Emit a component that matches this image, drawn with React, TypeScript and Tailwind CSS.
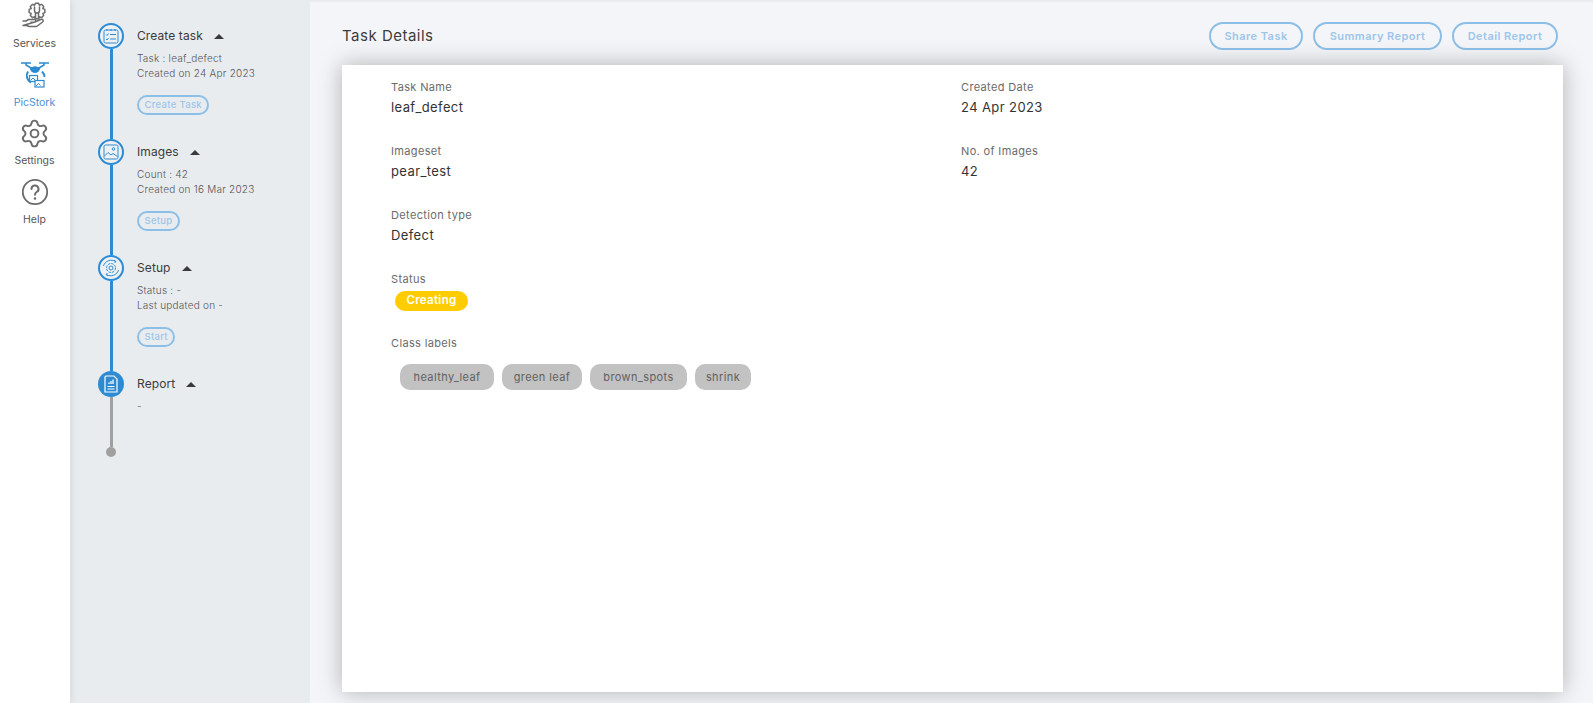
import React from "react";
import { Settings } from "lucide-react";

const BLUE = "#2d8bd3";

// 8 tooth outline round (cx, cy), used by the services icon only
function gearPath(cx: number, cy: number, outer: number, inner: number) {
  const pts: string[] = [];
  for (let i = 0; i < 8; i++) {
    const a = (i * Math.PI) / 4;
    [
      [-0.39, inner],
      [-0.2, outer],
      [0.2, outer],
      [0.39, inner],
    ].forEach(([d, r]) => {
      pts.push(`${(cx + r * Math.sin(a + d)).toFixed(2)} ${(cy - r * Math.cos(a + d)).toFixed(2)}`);
    });
  }
  return `M${pts.join("L")}z`;
}

function ServicesIcon() {
  return (
    <svg width="30" height="30" viewBox="0 0 30 30" fill="none" stroke="#6b6b6b" strokeWidth="1.500" strokeLinejoin="round" strokeLinecap="round">
      <path d={gearPath(17, 10, 8, 6.300)} fill="#fff" />
      <path d="M14.500 6v3.500a2.500 2.500 0 0 0 5 0V6M15.500 12v6M18.500 12v6" />
      <path d="M3 20h3l2.500-1.500h6c1.800 0 1.800 2.800 0 2.800h-3.500M14.800 21l6-2.500c2-.7 3.200 1.300 1.800 2.500l-6 4.500H9L7 24.500H3z" fill="#fff" />
    </svg>
  );
}

function DroneIcon() {
  return (
    <svg width="30" height="30" viewBox="0 0 30 30" fill="none" stroke={BLUE} strokeWidth="1.500">
      <path d="M1 3h10M19 3h10M6 3v2l5 3h8l5-3V3" />
      <path d="M10.500 8c.5 2.500 2 4 4.500 4s4-1.500 4.500-4z" fill={BLUE} />
      <circle cx="15" cy="9.500" r="2.500" fill={BLUE} />
      <path d="M8 11.500c-2.500 4-1 9 3 11M22 11.500c1.500 1.500 2.500 3.500 2.500 5.500" strokeWidth="2" />
      <rect x="9.500" y="15.500" width="8" height="6" fill="#fff" strokeWidth="1.200" />
      <rect x="15" y="20.500" width="9" height="6.500" fill="#fff" strokeWidth="1.200" />
      <path d="M10.500 20.500l2.500-2.500 2.500 2.500M16 26l2.500-2.500 2 2" strokeWidth="1" />
    </svg>
  );
}

function HelpIcon() {
  return (
    <svg width="28" height="28" viewBox="0 0 28 28" fill="none" stroke="#6b6b6b" strokeWidth="1.800" strokeLinecap="round">
      <circle cx="14" cy="14" r="12.200" />
      <path d="M10.500 11a3.500 3.500 0 1 1 5.200 3c-1.200.7-1.700 1.300-1.700 2.800" strokeWidth="2" />
      <circle cx="14" cy="20.500" r="0.600" strokeWidth="1.400" />
    </svg>
  );
}

function TaskGlyph() {
  return (
    <svg width="16" height="16" viewBox="0 0 16 16" fill="none" stroke={BLUE} strokeWidth="1">
      <rect x="1" y="2" width="14" height="13" rx="1.500" />
      <path d="M4 1v2M8 1v2M12 1v2M3 6.500l1 1 1.500-2M7 6.500h6M3 11l1 1 1.500-2M7 11h6" />
    </svg>
  );
}

function ImageGlyph() {
  return (
    <svg width="16" height="16" viewBox="0 0 16 16" fill="none" stroke={BLUE} strokeWidth="1">
      <rect x="1" y="1" width="14" height="14" rx="1.500" />
      <circle cx="10.500" cy="5" r="1.300" />
      <path d="M1.500 12l3.500-3.500 3 2.500 2-1.500 4.500 3" />
    </svg>
  );
}

function SetupGlyph() {
  return (
    <svg width="20" height="20" viewBox="0 0 20 20" fill="none" stroke={BLUE} strokeWidth="1">
      <circle cx="10" cy="10" r="2" />
      <circle cx="10" cy="10" r="4.500" strokeDasharray="2.500 1" />
      <path d="M2.500 8A8 8 0 0 1 14.500 3.500M17.500 12A8 8 0 0 1 5.500 16.500" />
      <path d="M13 2l2 1.500-1.500 1.500M7 18l-2-1.500 1.500-1.500" />
    </svg>
  );
}

function ReportGlyph() {
  return (
    <svg width="16" height="18" viewBox="0 0 16 18" fill="none" stroke="#fff" strokeWidth="1.200">
      <path d="M3 1h8l3 3v13H2V2z" />
      <path d="M4.500 11.500h7M4.500 14h7" />
      <path d="M6 9V7.500M8 9V6M10 9V4.500" strokeWidth="1.300" />
    </svg>
  );
}

function SideItem({ icon, label, active, h }: { icon: React.ReactNode; label: string; active?: boolean; h: string }) {
  return (
    <div className={`flex flex-col items-center ${h}`}>
      <div className="flex h-[30px] items-center justify-center">{icon}</div>
      <div className={`mt-[6px] text-[10.500px] leading-[14px] ${active ? "text-[#4a8fd6]" : "text-[#555]"}`}>{label}</div>
    </div>
  );
}

function Caret() {
  return <span className="ml-[11px] h-0 w-0 border-x-[5px] border-b-[5px] border-x-transparent border-b-[#3a3a3a]" />;
}

function Step({
  icon,
  title,
  lines,
  action,
}: {
  icon: React.ReactNode;
  title: string;
  lines: string[];
  action: string;
}) {
  return (
    <div className="flex h-[116px]">
      <div className="flex w-[26px] shrink-0 flex-col items-center">
        <div className="flex h-[26px] w-[26px] shrink-0 items-center justify-center rounded-full border-[2px] border-[#2d8bd3] bg-[#eef1f4]">
          {icon}
        </div>
        <div className="w-[3px] flex-1 bg-[#2d8bd3]" />
      </div>
      <div className="ml-[13px] flex flex-col items-start">
        <div className="flex h-[26px] items-center text-[12px] tracking-[0.1px] text-[#3b3b3b]">
          {title}
          <Caret />
        </div>
        <div className="mt-[2px] text-[10px] font-light leading-[15px] tracking-[0.23px] text-[#555]">
          {lines.map((l) => (
            <div key={l}>{l}</div>
          ))}
        </div>
        <div className="mt-[14px] flex h-[20px] items-center rounded-full border-[2px] border-[#8cbfe8] px-[5.500px] text-[9.500px] font-medium tracking-[0.3px] text-[#9cc6ea]">
          {action}
        </div>
      </div>
    </div>
  );
}

function Field({ label, value }: { label: string; value: string }) {
  return (
    <div className="h-[64px]">
      <div className="text-[11px] leading-[16px] tracking-[0.35px] text-[#6a6a6a]">{label}</div>
      <div className="mt-[2px] text-[13px] leading-[20px] tracking-[0.4px] text-[#333]">{value}</div>
    </div>
  );
}

function HeaderButton({ label, w }: { label: string; w: string }) {
  return (
    <div className={`flex h-[28px] items-center justify-center rounded-full border-[2px] border-[#8cbfe8] text-[11px] font-semibold tracking-[0.45px] text-[#9cc6ea] ${w}`}>
      {label}
    </div>
  );
}

export default function App() {
  return (
    <div className="flex h-[703px] w-[1593px] overflow-hidden bg-[#f4f5f8] font-['Inter','Liberation_Sans',sans-serif]">
      {/* left nav */}
      <div className="z-10 w-[70px] shrink-0 bg-white pr-[1px] shadow-[0_0_8px_rgba(0,0,0,0.12)]">
        <div className="mt-[1px] flex flex-col">
          <SideItem icon={<ServicesIcon />} label="Services" h="h-[59px]" />
          <SideItem icon={<DroneIcon />} label="PicStork" active h="h-[58px]" />
          <SideItem icon={<Settings size={31} strokeWidth={1.500} color="#6b6b6b" />} label="Settings" h="h-[59px]" />
          <SideItem icon={<HelpIcon />} label="Help" h="h-[59px]" />
        </div>
      </div>

      {/* steps panel */}
      <div className="flex w-[240px] shrink-0 flex-col bg-[#e9ecef] pl-[28px] pt-[23px]">
        <Step icon={<TaskGlyph />} title="Create task" lines={["Task : leaf_defect", "Created on 24 Apr 2023"]} action="Create Task" />
        <Step icon={<ImageGlyph />} title="Images" lines={["Count : 42", "Created on 16 Mar 2023"]} action="Setup" />
        <Step icon={<SetupGlyph />} title="Setup" lines={["Status : -", "Last updated on -"]} action="Start" />
        <div className="flex h-[86px]">
          <div className="flex w-[26px] shrink-0 flex-col items-center">
            <div className="flex h-[26px] w-[26px] shrink-0 items-center justify-center rounded-full bg-[#2d8bd3]">
              <ReportGlyph />
            </div>
            <div className="w-[3px] flex-1 bg-[#a0a0a0]" />
            <div className="h-[10px] w-[10px] shrink-0 rounded-full bg-[#a0a0a0]" />
          </div>
          <div className="ml-[13px] flex flex-col items-start">
            <div className="flex h-[26px] items-center text-[12px] tracking-[0.1px] text-[#3b3b3b]">
              Report
              <Caret />
            </div>
            <div className="mt-[2px] text-[10px] font-light leading-[15px] text-[#555]">-</div>
          </div>
        </div>
      </div>

      {/* main */}
      <div className="flex min-w-0 flex-1 flex-col pl-[32px] pr-[30px] pt-[22px] shadow-[inset_0_3px_3px_-2px_rgba(0,0,0,0.08)]">
        <div className="flex h-[28px] items-center justify-between pr-[5px]">
          <div className="text-[15px] tracking-[0.5px] text-[#3c3c3c]">Task Details</div>
          <div className="flex gap-[10px]">
            <HeaderButton label="Share Task" w="w-[94px]" />
            <HeaderButton label="Summary Report" w="w-[129px]" />
            <HeaderButton label="Detail Report" w="w-[106px]" />
          </div>
        </div>
        <div className="mt-[15px] h-[627px] bg-white pl-[49px] pt-[14px] shadow-[0_0_22px_rgba(0,0,0,0.28)]">
          <div className="grid grid-cols-[570px_1fr]">
            <Field label="Task Name" value="leaf_defect" />
            <Field label="Created Date" value="24 Apr 2023" />
            <Field label="Imageset" value="pear_test" />
            <Field label="No. of Images" value="42" />
            <Field label="Detection type" value="Defect" />
            <div />
          </div>
          <div className="text-[11px] leading-[16px] tracking-[0.35px] text-[#6a6a6a]">Status</div>
          <div className="ml-[4px] mt-[4px] flex h-[20px] w-[73px] items-center justify-center rounded-full bg-[#ffcc00] text-[11.500px] font-semibold tracking-[0.3px] text-white">
            Creating
          </div>
          <div className="mt-[24px] text-[11px] leading-[16px] tracking-[0.35px] text-[#6a6a6a]">Class labels</div>
          <div className="ml-[9px] mt-[13px] flex gap-[8px]">
            {[
              ["healthy_leaf", "w-[94px]"],
              ["green leaf", "w-[80px]"],
              ["brown_spots", "w-[97px]"],
              ["shrink", "w-[56px]"],
            ].map(([t, w]) => (
              <div key={t} className={`flex h-[26px] items-center justify-center rounded-[10px] bg-[#c2c2c2] text-[11px] tracking-[0.4px] text-[#616161] ${w}`}>
                {t}
              </div>
            ))}
          </div>
        </div>
      </div>
    </div>
  );
}
